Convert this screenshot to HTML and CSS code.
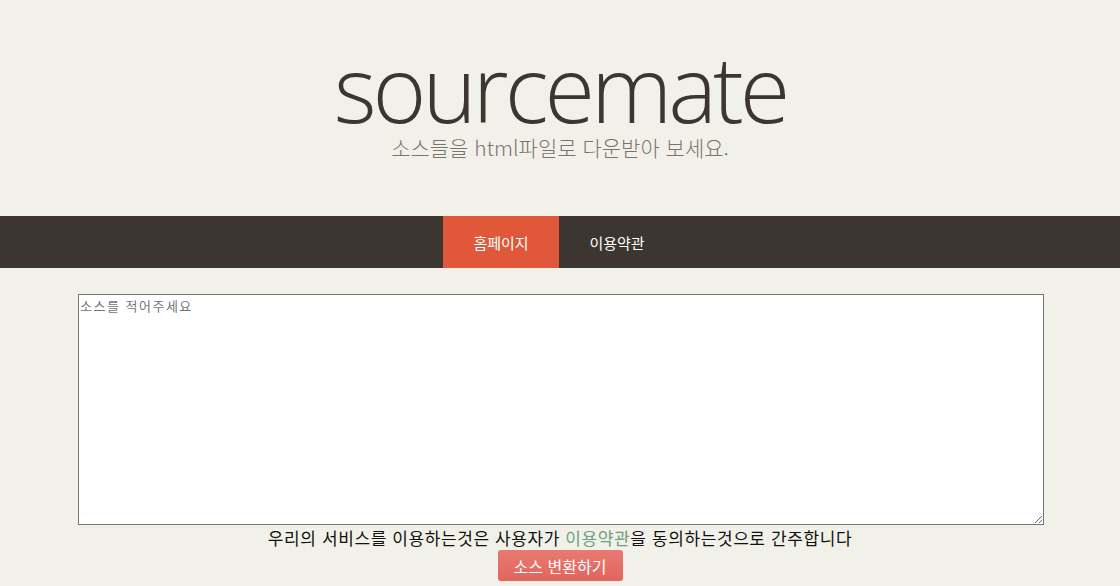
FILE: index.html
```html
<!DOCTYPE html>
<html lang="ko">
<head>
<meta charset="utf-8">
<title>sourcemate</title>
<link rel="stylesheet" href="styles.css">
</head>
<body>
<header class="masthead">
  <h1 class="logo">sourcemate</h1>
  <p class="tagline">소스들을 html파일로 다운받아 보세요.</p>
</header>
<nav class="nav">
  <a class="nav-item active" href="#">홈페이지</a>
  <a class="nav-item" href="#">이용약관</a>
</nav>
<main class="content">
  <textarea class="source" placeholder="소스를 적어주세요"></textarea>
  <p class="notice">우리의 서비스를 이용하는것은 사용자가 <a href="#" class="terms">이용약관</a>을 동의하는것으로 간주합니다</p>
  <button class="convert" type="button">소스 변환하기</button>
</main>
</body>
</html>
```
FILE: styles.css
```css
html, body {
  margin: 0;
  padding: 0;
  background: #f1f1e9;
  font-family: "Noto Sans CJK KR", "Open Sans", sans-serif;
}
.masthead {
  height: 216px;
  display: flex;
  flex-direction: column;
  align-items: center;
  box-sizing: border-box;
  padding-top: 44px;
}
.logo {
  margin: 0;
  font-family: "Open Sans", sans-serif;
  font-weight: 300;
  font-size: 92px;
  line-height: 88px;
  letter-spacing: -4px;
  color: #3c3530;
}
.tagline {
  margin: 2px 0 0;
  font-size: 21px;
  line-height: 26px;
  color: #7b736c;
  font-weight: 300;
}
.nav {
  height: 52px;
  background: #3c3530;
  display: flex;
  justify-content: center;
  padding-right: 2px;
}
.nav-item {
  width: 116px;
  display: flex;
  align-items: center;
  justify-content: center;
  color: #fff;
  text-decoration: none;
  font-size: 15px;
}
.nav-item.active {
  background: #e05839;
}
.content {
  display: flex;
  flex-direction: column;
  align-items: center;
  padding-top: 26px;
}
.source {
  width: 966px;
  height: 231px;
  box-sizing: border-box;
  margin: 0 0 0 2px;
  border: 1px solid #767676;
  background: #fff;
  font-family: "Noto Sans CJK KR", monospace;
  font-size: 13px;
  letter-spacing: 1.5px;
  padding: 1px 1px;
  resize: both;
}
.source::placeholder {
  color: #757575;
}
.notice {
  margin: 1px 0 0;
  font-size: 17px;
  line-height: 24px;
  letter-spacing: 0.6px;
  color: #111;
}
.terms {
  color: #6d9f80;
  text-decoration: none;
}
.convert {
  margin-top: 0;
  width: 125px;
  height: 31px;
  border: none;
  border-radius: 3px;
  background: linear-gradient(#e77a72, #e2655c);
  color: #fff;
  font-family: "Noto Sans CJK KR", sans-serif;
  font-size: 16px;
  padding: 0;
}
```
